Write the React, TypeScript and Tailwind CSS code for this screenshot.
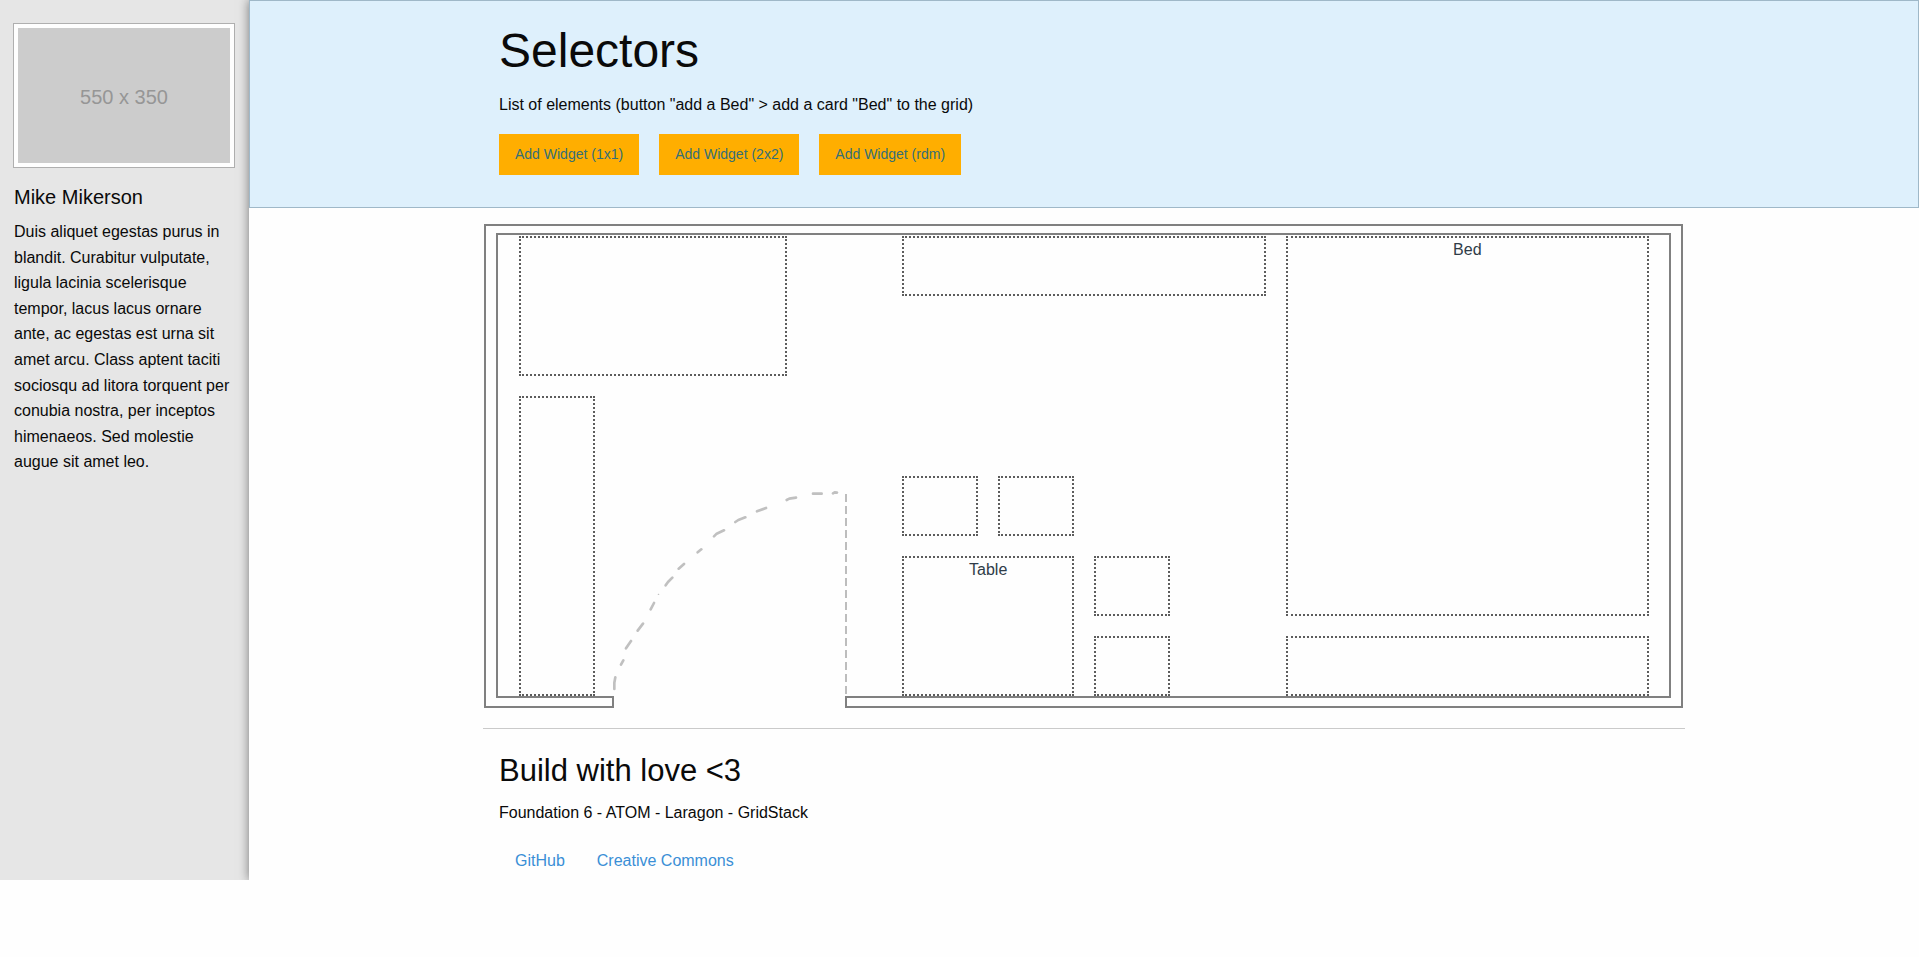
const widgets = [
  { id: 'w1', label: '', place: 'col-start-1 col-span-3 row-start-1 row-span-2' },
  { id: 'w2', label: '', place: 'col-start-1 col-span-1 row-start-3 row-span-4' },
  { id: 'w3', label: '', place: 'col-start-5 col-span-4 row-start-1 row-span-1' },
  { id: 'w4', label: 'Bed', place: 'col-start-9 col-span-4 row-start-1 row-span-5' },
  { id: 'w5', label: '', place: 'col-start-5 col-span-1 row-start-4 row-span-1' },
  { id: 'w6', label: '', place: 'col-start-6 col-span-1 row-start-4 row-span-1' },
  { id: 'w7', label: 'Table', place: 'col-start-5 col-span-2 row-start-5 row-span-2' },
  { id: 'w8', label: '', place: 'col-start-7 col-span-1 row-start-5 row-span-1' },
  { id: 'w9', label: '', place: 'col-start-7 col-span-1 row-start-6 row-span-1' },
  { id: 'w10', label: '', place: 'col-start-9 col-span-4 row-start-6 row-span-1' },
];

const buttons = ['Add Widget (1x1)', 'Add Widget (2x2)', 'Add Widget (rdm)'];

const links = ['GitHub', 'Creative Commons'];

// Door opening in the bottom wall, with the swing of the door leaf.
function Door() {
  return (
    <svg
      className="absolute -bottom-0.5 left-[126px]"
      width="235"
      height="218"
      viewBox="0 0 235 218"
      fill="none"
      aria-hidden="true"
    >
      <rect x="0" y="206" width="235" height="12" fill="#fefefe" />
      <path d="M0 207H1V217H0M235 207H234V217H235" stroke="#808080" strokeWidth="2" />
      <path d="M234 4V204" stroke="#bdbdbd" strokeWidth="2" strokeDasharray="8 4" />
      <g transform="translate(-12 -10) scale(0.33333)" stroke="#c0c0c0" strokeWidth="8" strokeLinecap="round" strokeLinejoin="round">
        <path d="M43 627V608L46 592M63 554L70 541M78 505L93 483M113 452L129 431M152 388L162 369M197 316L204 306L217 293M236 266L252 252M293 217L304 208M342 169L350 161L372 151M406 126L415 120L436 112M471 94L498 84M560 60L568 56L588 53M639 41H665M699 40L704 37L711 38" />
        <path d="M175 343H176" strokeWidth="4" />
      </g>
    </svg>
  );
}

function Sidebar() {
  return (
    <aside className="w-[249px] shrink-0 bg-[#e6e6e6] px-3.5 pt-6">
      <div
        role="img"
        aria-label="550 x 350"
        className="flex h-[143px] w-[220px] items-center justify-center border-4 border-[#fefefe] bg-[#cccccc] pt-0.5 text-xl text-[#969696] shadow-[0_0_0_1px_rgba(10,10,10,0.25)]"
      >
        550 x 350
      </div>
      <h5 className="mt-4 mb-2 text-xl leading-7">Mike Mikerson</h5>
      <p className="leading-[1.6]">
        Duis aliquet egestas purus in blandit. Curabitur vulputate, ligula lacinia scelerisque tempor, lacus lacus
        ornare ante, ac egestas est urna sit amet arcu. Class aptent taciti sociosqu ad litora torquent per conubia
        nostra, per inceptos himenaeos. Sed molestie augue sit amet leo.
      </p>
    </aside>
  );
}

export default function App() {
  return (
    <div className="min-h-screen bg-[#fefefe] font-['Liberation_Sans',Arial,sans-serif] text-base text-[#0a0a0a]">
      <div className="flex overflow-hidden">
        <Sidebar />
        <main className="min-w-0 flex-1 bg-[#fefefe] shadow-[0_0_10px_rgba(10,10,10,0.5)]">
          <header className="border border-[#9fb8c8] bg-[#def0fc] py-4">
            <div className="mx-auto max-w-[1200px] px-[15px]">
              <h1 className="mb-2 text-5xl leading-[1.4]">Selectors</h1>
              <p className="mb-4 leading-[1.6]">
                List of elements (button "add a Bed" &gt; add a card "Bed" to the grid)
              </p>
              <div className="mb-4 flex gap-5">
                {buttons.map((label) => (
                  <button
                    key={label}
                    type="button"
                    className="h-[41px] bg-[#ffae00] px-4 text-sm text-[#356f78]"
                  >
                    {label}
                  </button>
                ))}
              </div>
            </div>
          </header>

          <div className="mx-auto mt-4 max-w-[1200px] pr-px">
            <section className="relative border-2 border-[#808080] px-2.5 pt-[7px] pb-2">
              <div className="border-2 border-[#808080] pt-px pr-5 pl-[21px]">
                <div className="grid grid-cols-12 grid-rows-[repeat(6,60px)] gap-5">
                  {widgets.map((w) => (
                    <div
                      key={w.id}
                      className={`${w.place} border-2 border-dotted border-[#5c5c5c] text-center leading-6 text-[#2f3c48]`}
                    >
                      {w.label}
                    </div>
                  ))}
                </div>
              </div>
              <Door />
            </section>
          </div>

          <hr className="mx-auto my-5 max-w-[1202px] border-[#cacaca]" />

          <footer className="mx-auto max-w-[1200px] px-[15px]">
            <h3 className="mb-2 text-[31px] leading-[1.4]">Build with love &lt;3</h3>
            <p className="mb-4 leading-[1.6]">Foundation 6 - ATOM - Laragon - GridStack</p>
            <nav className="flex">
              {links.map((label) => (
                <a key={label} href="#" className="px-4 py-[11px] leading-4 text-[#3a8fd6]">
                  {label}
                </a>
              ))}
            </nav>
          </footer>
        </main>
      </div>
    </div>
  );
}
